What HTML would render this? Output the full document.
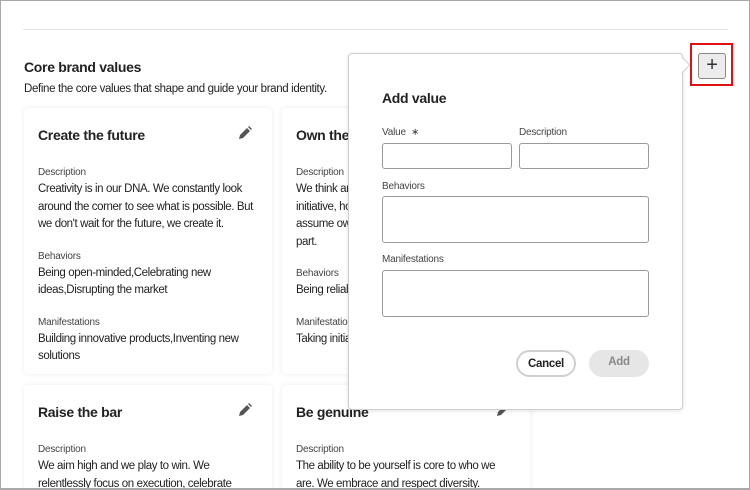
<!DOCTYPE html>
<html><head><meta charset="utf-8"><style>
*{box-sizing:border-box;margin:0;padding:0}
html,body{width:750px;height:490px;overflow:hidden}
body{background:#fff;font-family:"Liberation Sans",sans-serif;color:#222;position:relative;letter-spacing:-0.3px}
.frame{position:absolute;left:0;top:0;width:750px;height:490px;border:1px solid #a8a8a8;border-bottom:2px solid #a8a8a8;z-index:10;pointer-events:none}
.hr{position:absolute;left:23px;top:29px;width:705px;height:1px;background:#e4e4e4}
h2{position:absolute;left:24px;top:59px;font-size:14px;font-weight:bold}
.sub{position:absolute;left:24px;top:83px;font-size:11.5px;color:#222;letter-spacing:-0.35px}
.card{position:absolute;width:248px;background:#fff;border-radius:4px;box-shadow:0 0 6px rgba(0,0,0,.08);padding:0 14px;overflow:hidden}
.card h3{font-size:14px;font-weight:bold;margin-top:19px;height:20px}
.pen{position:absolute;right:20px;top:18px}
.lbl{font-size:10px;color:#444;margin-top:17px;letter-spacing:-0.2px}
.txt{font-size:11.5px;line-height:17.5px;margin-top:3px;color:#222;letter-spacing:-0.4px}
.pop{position:absolute;left:348px;top:53px;width:335px;height:357px;background:#fff;border:1px solid #cfcfcf;border-radius:4px;box-shadow:0 1px 4px rgba(0,0,0,.12);z-index:5}
.arrow{position:absolute;left:676px;top:59px;width:12px;height:12px;background:#fff;border-top:1px solid #cfcfcf;border-right:1px solid #cfcfcf;transform:rotate(45deg);z-index:6}
.pop h4{position:absolute;left:33px;top:36px;font-size:14px;font-weight:bold}
.fl{position:absolute;font-size:10px;color:#444;letter-spacing:-0.2px}
.in{position:absolute;border:1px solid #9a9a9a;border-radius:3px;background:#fff}
.btn{position:absolute;top:296px;width:60px;height:27px;border-radius:14px;font-size:11.5px;font-weight:bold;text-align:center;line-height:25px}
.plus{position:absolute;left:698px;top:53px;width:28px;height:26px;border:1px solid #888;border-radius:3px;background:#ececec;text-align:center;line-height:23px;font-size:20px;color:#333;z-index:7}
.red{position:absolute;left:690px;top:43px;width:43px;height:43px;border:2px solid #e01010;z-index:8}
</style></head><body>
<div class="frame"></div>
<div class="hr"></div>
<h2>Core brand values</h2>
<div class="sub">Define the core values that shape and guide your brand identity.</div>

<div class="card" style="left:24px;top:108px;height:266px">
<h3>Create the future</h3>
<svg class="pen" width="14" height="14" viewBox="0 0 14 14"><path d="M1 13l1-4 7-7 3 3-7 7z M10 1l1-1 3 3-1 1z" fill="#555"/></svg>
<div style="margin-top:20px" class="lbl">Description</div>
<div class="txt">Creativity is in our DNA. We constantly look around the corner to see what is possible. But we don't wait for the future, we create it.</div>
<div class="lbl">Behaviors</div>
<div class="txt">Being open-minded,Celebrating new ideas,Disrupting the market</div>
<div class="lbl">Manifestations</div>
<div class="txt">Building innovative products,Inventing new solutions</div>
</div>

<div class="card" style="left:282px;top:108px;height:266px">
<h3>Own the outcome</h3>
<div style="margin-top:20px" class="lbl">Description</div>
<div class="txt">We think and act like owners. We take initiative, hold ourselves accountable and assume ownership of the outcome as our<br>part.</div>
<div class="lbl">Behaviors</div>
<div class="txt">Being reliable</div>
<div class="lbl">Manifestations</div>
<div class="txt">Taking initiative</div>
</div>

<div class="card" style="left:24px;top:385px;height:120px">
<h3>Raise the bar</h3>
<svg class="pen" width="14" height="14" viewBox="0 0 14 14"><path d="M1 13l1-4 7-7 3 3-7 7z M10 1l1-1 3 3-1 1z" fill="#555"/></svg>
<div style="margin-top:20px" class="lbl">Description</div>
<div class="txt">We aim high and we play to win. We relentlessly focus on execution, celebrate</div>
</div>

<div class="card" style="left:282px;top:385px;height:120px">
<h3>Be genuine</h3>
<svg class="pen" width="14" height="14" viewBox="0 0 14 14"><path d="M1 13l1-4 7-7 3 3-7 7z M10 1l1-1 3 3-1 1z" fill="#555"/></svg>
<div style="margin-top:20px" class="lbl">Description</div>
<div class="txt">The ability to be yourself is core to who we are. We embrace and respect diversity.</div>
</div>

<div class="pop">
<h4>Add value</h4>
<div class="fl" style="left:33px;top:73px">Value &nbsp;∗</div>
<div class="fl" style="left:170px;top:73px">Description</div>
<div class="in" style="left:33px;top:89px;width:130px;height:26px"></div>
<div class="in" style="left:170px;top:89px;width:130px;height:26px"></div>
<div class="fl" style="left:33px;top:127px">Behaviors</div>
<div class="in" style="left:33px;top:142px;width:267px;height:47px"></div>
<div class="fl" style="left:33px;top:200px">Manifestations</div>
<div class="in" style="left:33px;top:216px;width:267px;height:47px"></div>
<div class="btn" style="left:167px;border:2px solid #cfcfcf;color:#222">Cancel</div>
<div class="btn" style="left:240px;background:#e6e6e6;color:#888">Add</div>
</div>
<div class="arrow"></div>
<div class="plus">+</div>
<div class="red"></div>
</body></html>
